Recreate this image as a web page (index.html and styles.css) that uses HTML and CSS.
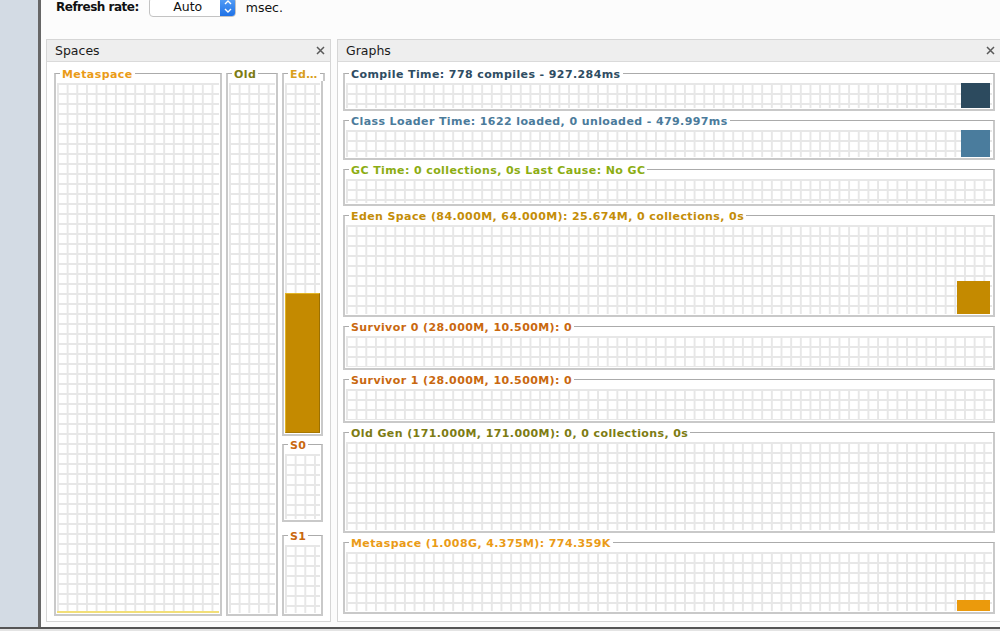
FILE: index.html
```html
<!DOCTYPE html>
<html>
<head>
<meta charset="utf-8">
<title>Visual GC</title>
<link rel="stylesheet" href="styles.css">
</head>
<body>
<div class="app">
  <aside class="sidebar"></aside>
  <main class="main">
    <div class="toolbar">
      <span class="label">Refresh rate:</span>
      <div class="combo">
        <span class="combo-value">Auto</span>
        <span class="stepper"><svg width="16" height="20" viewBox="0 0 16 20"><path d="M5 7L8 4L11 7M5 12L8 15L11 12" fill="none" stroke="#fff" stroke-width="1.4"/></svg></span>
      </div>
      <span class="unit">msec.</span>
    </div>
    <div class="panels">
      <section class="panel spaces">
        <header class="panel-head"><span>Spaces</span><svg class="close" width="9" height="9" viewBox="0 0 9 9"><path d="M1 1L8 8M8 1L1 8" stroke="#5a5a5a" stroke-width="1.5"/></svg></header>
        <div class="panel-body spaces-body">
          <div class="box sp-meta">
            <div class="box-title"><span class="t-meta">Metaspace</span></div>
            <div class="box-frame"><div class="grid"><div class="sfill meta-line"></div></div></div>
          </div>
          <div class="box sp-old">
            <div class="box-title"><span class="t-old">Old</span></div>
            <div class="box-frame"><div class="grid"></div></div>
          </div>
          <div class="young-col">
            <div class="box sp-eden">
              <div class="box-title"><span class="t-ed">Ed…</span></div>
              <div class="box-frame"><div class="grid"><div class="sfill eden-fill" style="height:40.1%"></div></div></div>
            </div>
            <div class="box sp-s0">
              <div class="box-title"><span class="t-surv">S0</span></div>
              <div class="box-frame"><div class="grid"></div></div>
            </div>
            <div class="box sp-s1">
              <div class="box-title"><span class="t-surv">S1</span></div>
              <div class="box-frame"><div class="grid"></div></div>
            </div>
          </div>
        </div>
      </section>
      <section class="panel graphs">
        <header class="panel-head"><span>Graphs</span><svg class="close" width="9" height="9" viewBox="0 0 9 9"><path d="M1 1L8 8M8 1L1 8" stroke="#5a5a5a" stroke-width="1.5"/></svg></header>
        <div class="panel-body graphs-body">
          <div class="box g-compile">
            <div class="box-title"><span class="t-compile">Compile Time: 778 compiles - 927.284ms</span></div>
            <div class="box-frame"><div class="grid"><div class="gfill f-compile" style="height:100%"></div></div></div>
          </div>
          <div class="box g-class">
            <div class="box-title"><span class="t-class">Class Loader Time: 1622 loaded, 0 unloaded - 479.997ms</span></div>
            <div class="box-frame"><div class="grid"><div class="gfill f-class" style="height:100%"></div></div></div>
          </div>
          <div class="box g-gc">
            <div class="box-title"><span class="t-gc">GC Time: 0 collections, 0s Last Cause: No GC</span></div>
            <div class="box-frame"><div class="grid"></div></div>
          </div>
          <div class="box g-eden">
            <div class="box-title"><span class="t-eden">Eden Space (84.000M, 64.000M): 25.674M, 0 collections, 0s</span></div>
            <div class="box-frame"><div class="grid"><div class="gfill f-eden" style="height:37%"></div></div></div>
          </div>
          <div class="box g-s0">
            <div class="box-title"><span class="t-surv">Survivor 0 (28.000M, 10.500M): 0</span></div>
            <div class="box-frame"><div class="grid"></div></div>
          </div>
          <div class="box g-s1">
            <div class="box-title"><span class="t-surv">Survivor 1 (28.000M, 10.500M): 0</span></div>
            <div class="box-frame"><div class="grid"></div></div>
          </div>
          <div class="box g-old">
            <div class="box-title"><span class="t-old">Old Gen (171.000M, 171.000M): 0, 0 collections, 0s</span></div>
            <div class="box-frame"><div class="grid"></div></div>
          </div>
          <div class="box g-meta">
            <div class="box-title"><span class="t-meta">Metaspace (1.008G, 4.375M): 774.359K</span></div>
            <div class="box-frame"><div class="grid"><div class="gfill f-meta" style="height:18%"></div></div></div>
          </div>
        </div>
      </section>
    </div>
  </main>
</div>
<div class="bottombar"></div>
</body>
</html>
```
FILE: styles.css
```css
* { box-sizing: border-box; }
html, body { margin: 0; padding: 0; }
body {
  width: 1000px;
  height: 631px;
  overflow: hidden;
  display: flex;
  flex-direction: column;
  font-family: "DejaVu Sans", "Noto Sans", sans-serif;
  background: #fff;
  color: #111;
}
.app { display: flex; height: 627px; flex: none; }
.sidebar {
  width: 41px;
  flex: none;
  background: #d3dbe4;
  border-right: 3px solid #676767;
}
.main {
  flex: 1;
  min-width: 0;
  display: flex;
  flex-direction: column;
  padding-left: 5px;
  overflow: hidden;
  background: #fcfcfc;
}
.toolbar {
  display: flex;
  align-items: center;
  height: 20px;
  margin-top: -3px;
  padding-left: 10px;
  flex: none;
  font-size: 12px;
}
.label { font-weight: bold; letter-spacing: -0.5px; }
.combo {
  margin-left: 10px;
  width: 87px;
  height: 20px;
  display: flex;
  background: #fff;
  border: 1px solid #c3c3c3;
  border-radius: 4px;
  overflow: hidden;
}
.combo-value { flex: 1; text-align: center; font-size: 12.5px; line-height: 18px; padding-left: 6px; }
.stepper {
  width: 16px;
  flex: none;
  margin: -1px -1px -1px 0;
  background: linear-gradient(#5aa2f7, #1b6fe6);
  border-radius: 0 4px 4px 0;
  display: flex;
}
.unit { margin-left: 10px; font-size: 12.5px; }

.panels {
  flex: 1;
  display: flex;
  gap: 6px;
  margin-top: 22px;
  padding-bottom: 5px;
  min-height: 0;
}
.panel {
  display: flex;
  flex-direction: column;
  border: 1px solid #d6d6d6;
  background: #fff;
  flex: none;
}
.spaces { width: 285px; }
.graphs { width: 664px; }
.panel-head {
  height: 22px;
  flex: none;
  display: flex;
  align-items: center;
  justify-content: space-between;
  padding: 0 5px 0 8px;
  background: #eeeeee;
  border-bottom: 1px solid #dadada;
  font-size: 12.5px;
  color: #1a1a1a;
}
.panel-body { flex: 1; min-height: 0; }

.spaces-body {
  display: flex;
  gap: 4px;
  padding: 6px 7px 5px 7px;
}
.graphs-body {
  display: flex;
  flex-direction: column;
  gap: 4px;
  padding: 6px 5px 5px 5px;
}

/* titled border box */
.box {
  display: flex;
  flex-direction: column;
  min-width: 0;
  min-height: 0;
}
.box-title {
  display: flex;
  height: 13px;
  flex: none;
  font-size: 11px;
  font-weight: bold;
  line-height: 13px;
  letter-spacing: 0.4px;
  white-space: nowrap;
}
.box-title::before,
.box-title::after {
  content: "";
  align-self: flex-end;
  height: 7px;
  border-top: 1px solid #ababab;
}
.box-title::before {
  width: 4px;
  flex: none;
  border-left: 2px solid #c9c9c9;
}
.box-title::after {
  flex: 1;
  min-width: 3px;
  border-right: 2px solid #c9c9c9;
}
.box-title span { padding: 0 2px; }
.box-frame {
  flex: 1;
  min-height: 0;
  display: flex;
  flex-direction: column;
  border: 2px solid #c9c9c9;
  border-top: 0;
  padding: 2px 1px 1px 1px;
}
.grid {
  flex: 1;
  min-height: 0;
  display: flex;
  align-items: flex-end;
  justify-content: flex-end;
  background-color: #fff;
  background-image:
    linear-gradient(90deg, #e7e7e7 0 2px, transparent 2px),
    linear-gradient(180deg, #e7e7e7 0 2px, transparent 2px);
  background-size: 9.67px 10px;
}

.sp-meta { width: 168px; flex: none; }
.sp-old { width: 52px; flex: none; }
.young-col { width: 41px; flex: none; display: flex; flex-direction: column; }
.sp-eden { flex: 1; }
.sp-s0 { height: 83px; flex: none; margin-top: 3px; }
.sp-s1 { height: 86px; flex: none; margin-top: 8px; }

.sfill { width: 100%; }
.meta-line { height: 2px; background: #f2df78; }
.eden-fill {
  background: #c48a00;
  border: 1px solid #e3b526;
  border-right-color: #9c7000;
  border-bottom-color: #a77800;
}

.g-compile, .g-class, .g-gc, .g-eden, .g-s0, .g-s1, .g-old, .g-meta { flex: none; }
.g-compile { height: 43px; }
.g-class { height: 45px; }
.g-gc { height: 42px; }
.g-eden { height: 107px; }
.g-s0 { height: 49px; }
.g-s1 { height: 49px; }
.g-old { height: 106px; }
.g-meta { height: 77px; }

.gfill { margin-right: 2px; }
.f-compile { width: 29px; background: #2c4a5e; }
.f-class { width: 29px; background: #4a7c9d; }
.f-eden { width: 33px; background: #c48a00; }
.f-meta { width: 33px; background: #eb9a0c; }

.t-compile { color: #2e4c62; }
.t-class { color: #4b7b9b; }
.t-gc { color: #8cad12; }
.t-eden { color: #c48d08; }
.t-surv { color: #c9680f; }
.t-old { color: #7d7c13; }
.t-meta { color: #ea9b17; }
.t-ed { color: #d99f1c; }

.bottombar {
  height: 4px;
  flex: none;
  border-top: 2px solid #555;
  background: #e4e4e4;
}
```
